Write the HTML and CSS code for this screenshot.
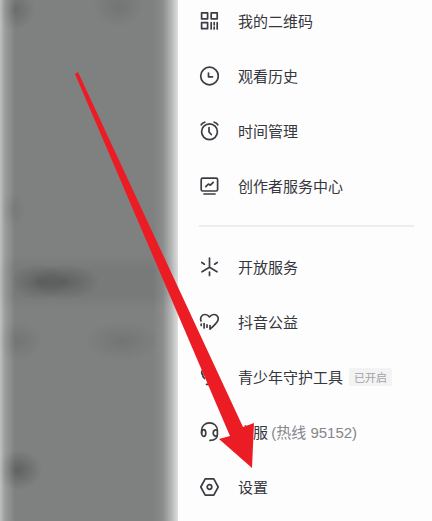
FILE: index.html
```html
<!DOCTYPE html>
<html lang="zh-CN">
<head>
    <meta charset="UTF-8">
    <meta name="viewport" content="width=device-width, initial-scale=1.0">
    <title>设置</title>
    <link rel="stylesheet" href="styles.css">
</head>
<body>

<div class="screen">
    <div class="backdrop"></div>

    <nav class="menu">
        <ul class="menu-list">
            <li>
                <a class="menu-item" href="#qrcode">
                    <svg class="menu-icon" viewBox="0 0 20 20">
                        <rect x="2.6" y="1.8" width="6" height="6"/>
                        <rect x="12.2" y="1.8" width="6" height="6"/>
                        <rect x="2.6" y="11.7" width="6" height="6"/>
                        <path d="M12.2 11.5v6.4M15.2 11.5v2.3M15.2 16v1.9M18.2 11.5v6.4"/>
                    </svg>
                    <span>我的二维码</span>
                </a>
            </li>
            <li>
                <a class="menu-item" href="#history">
                    <svg class="menu-icon" viewBox="0 0 20 20">
                        <circle cx="10.5" cy="10" r="8.8"/>
                        <path d="M9.5 7v3.8h4"/>
                    </svg>
                    <span>观看历史</span>
                </a>
            </li>
            <li>
                <a class="menu-item" href="#time">
                    <svg class="menu-icon" viewBox="0 0 20 20">
                        <circle cx="10.5" cy="10.7" r="7.9"/>
                        <path d="M10 6.5v4.5l2.3 2.5M2.2 3.8Q3.4 1.8 5.8 1.2M18.8 3.8Q17.6 1.8 15.2 1.2"/>
                    </svg>
                    <span>时间管理</span>
                </a>
            </li>
            <li>
                <a class="menu-item" href="#creator">
                    <svg class="menu-icon" viewBox="0 0 20 20">
                        <rect x="2.2" y="2.2" width="16.4" height="12.8" rx="1.5"/>
                        <path d="M6.8 10.6l2.6-2.6 2 1.2 2.8-2.8M5 18h11"/>
                    </svg>
                    <span>创作者服务中心</span>
                </a>
            </li>
        </ul>

        <hr class="menu-divider">

        <ul class="menu-list">
            <li>
                <a class="menu-item" href="#open">
                    <svg class="menu-icon" viewBox="0 0 20 20">
                        <path d="M10.5 1v9.3M10.5 10.3L3 14.8M10.5 10.3l7.5 4.5M10.5 15v3.5M2.8 5.5l2.6 1.7M18.2 5.5l-2.6 1.7"/>
                    </svg>
                    <span>开放服务</span>
                </a>
            </li>
            <li>
                <a class="menu-item" href="#charity">
                    <svg class="menu-icon" viewBox="0 0 20 20">
                        <path d="M2 9C.8 5.3 3 2.5 6 2.5c2 0 3.5 1 4.5 2.4 1-1.4 2.6-2.4 4.5-2.4 3.7 0 5.4 4 3.2 7.2-1.6 2.5-4.5 5-7.2 7.4v-3.6M2.2 12v1.5M5.1 11.5v4.5M8 12.8v2.4"/>
                    </svg>
                    <span>抖音公益</span>
                </a>
            </li>
            <li>
                <a class="menu-item" href="#teen">
                    <svg class="menu-icon" viewBox="0 0 20 20">
                        <path d="M4 8C1.8 6 2.4 3.2 5 3.2M7.5 17.3h3M5.5 11.5C4 10 3.4 8 3.4 6.5"/>
                        <circle cx="10" cy="6.5" r="4"/>
                    </svg>
                    <span>青少年守护工具</span>
                    <span class="menu-badge">已开启</span>
                </a>
            </li>
            <li>
                <a class="menu-item" href="#support">
                    <svg class="menu-icon" viewBox="0 0 20 20">
                        <path d="M2.6 11V8.4C2.6 4 6 .9 10.5.9S18.4 4 18.4 8.4v4.2c0 3.8-2.4 5.8-7.4 5.8"/>
                        <ellipse cx="4.7" cy="11" rx="2.1" ry="3.4"/>
                        <path d="M18.2 8.2c-2.6-.8-4 .6-4 2.8s1.4 3.6 4 2.8"/>
                    </svg>
                    <span>客服 <span class="menu-note">(热线 95152)</span></span>
                </a>
            </li>
            <li>
                <a class="menu-item" href="#settings">
                    <svg class="menu-icon" viewBox="0 0 20 20">
                        <path d="M6.2 1.9h8.6l4.4 8.1-4.4 8.1H6.2L1.8 10z"/>
                        <circle cx="10.5" cy="10" r="2.3"/>
                    </svg>
                    <span>设置</span>
                </a>
            </li>
        </ul>
    </nav>

    <!-- arrow pointing at the settings row -->
    <svg class="arrow" width="180" height="398" viewBox="0 0 180 398">
        <path d="M0 2L3 0 168 355 179 351 177 396 144 367 155 364z"/>
    </svg>
</div>

</body>
</html>
```
FILE: styles.css
```css
body {
    margin: 0;
    font-family: "Noto Sans CJK SC", sans-serif;
    background-color: #fdfdfd;
}

.screen {
    position: relative;
    display: grid;
    grid-template-columns: 7fr 10fr;
    min-height: 100vh;
    overflow: hidden;
}

/* blurred page behind the open menu */
.backdrop {
    background:
        linear-gradient(to right, rgba(255, 255, 255, 0.5) 0, rgba(255, 255, 255, 0.22) 5px, transparent 15px),
        linear-gradient(to left, rgba(255, 255, 255, 0.75) 0, rgba(255, 255, 255, 0.4) 7px, rgba(255, 255, 255, 0.1) 15px, transparent 25px),
        radial-gradient(20px 20px at 15px 10px, rgba(60, 60, 60, 0.3), transparent),
        radial-gradient(26px 22px at 118px 6px, rgba(80, 80, 80, 0.25), transparent),
        radial-gradient(14px 18px at 11px 210px, rgba(80, 80, 80, 0.2), transparent),
        radial-gradient(30px 18px at 40px 282px, rgba(50, 50, 50, 0.35), transparent),
        radial-gradient(34px 18px at 66px 282px, rgba(50, 50, 50, 0.35), transparent),
        radial-gradient(26px 20px at 17px 341px, rgba(80, 80, 80, 0.25), transparent),
        radial-gradient(38px 20px at 122px 341px, rgba(80, 80, 80, 0.25), transparent),
        radial-gradient(24px 20px at 18px 470px, rgba(50, 50, 50, 0.4), transparent),
        linear-gradient(to bottom, transparent 255px, rgba(100, 100, 100, 0.25) 270px, rgba(100, 100, 100, 0.25) 295px, transparent 310px),
        #7f8180;
}

.menu {
    padding: 0 18px 0 21px;
}

.menu-list {
    display: flex;
    flex-direction: column;
    gap: 13px;
    margin: 0;
    padding: 0;
    list-style: none;
}

.menu-item {
    display: flex;
    align-items: center;
    height: 42px;
    color: #36373d;
    font-size: 15px;
    line-height: 22px;
    white-space: nowrap;
    text-decoration: none;
}

.menu-icon {
    width: 20px;
    height: 20px;
    margin-right: 19px;
    fill: none;
    stroke: #3c3d43;
    stroke-width: 1.7;
    stroke-linecap: round;
    stroke-linejoin: round;
}

.menu-note {
    color: #85868a;
    font-family: "Liberation Sans", "Noto Sans CJK SC", sans-serif;
}

.menu-badge {
    margin-left: 6px;
    padding: 0 5px;
    border-radius: 2px;
    background-color: #f3f3f4;
    color: #a2a2a6;
    font-size: 11px;
    line-height: 18px;
}

.menu-divider {
    height: 2px;
    margin: 18px 0 19px;
    border: none;
    background-color: #ededee;
}

.arrow {
    position: absolute;
    top: 72px;
    left: 75px;
    fill: #ec1c24;
    pointer-events: none;
}
```
